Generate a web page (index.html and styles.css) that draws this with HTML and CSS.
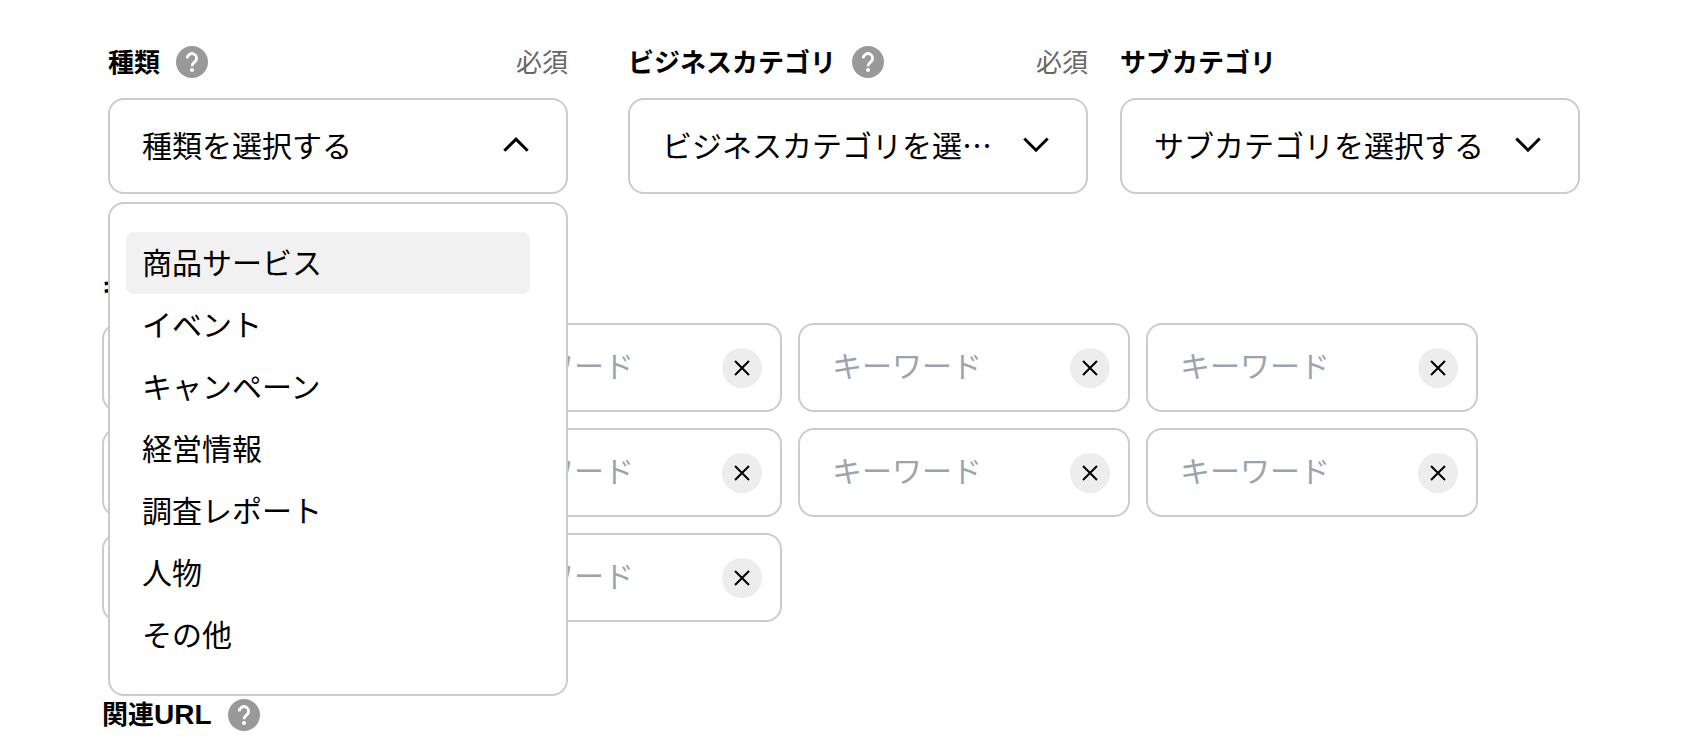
FILE: index.html
```html
<!doctype html>
<html lang="ja">
  <head>
    <title>種類・カテゴリ</title>
    <meta charset="utf-8" />
    <meta name="viewport" content="width=device-width, initial-scale=1" />
    <link rel="stylesheet" href="styles.css">
  </head>
  <body>
    <!-- shared icons -->
    <svg class="sprite" aria-hidden="true">
      <symbol id="icon-help" viewBox="0 0 32 32">
        <circle cx="16" cy="16" r="16" fill="#999"/>
        <path d="M11.4 12.4a4.6 4.6 0 1 1 7.4 3.4c-1.6 1.3-2.8 2-2.8 4.4" fill="none" stroke="#fff" stroke-width="2.8"/>
        <circle cx="16" cy="24" r="2" fill="#fff"/>
      </symbol>
      <symbol id="icon-down" viewBox="0 0 32 32">
        <path d="M4.3 8.5L16 20.2 27.700 8.5" fill="none" stroke="#000" stroke-width="3"/>
      </symbol>
      <symbol id="icon-up" viewBox="0 0 32 32">
        <path d="M4.300 20.800L16 9.100 27.700 20.800" fill="none" stroke="#000" stroke-width="3"/>
      </symbol>
      <symbol id="icon-close" viewBox="0 0 16 16">
        <path d="M1 1l14 14M15 1L1 15" fill="none" stroke="#000" stroke-width="2"/>
      </symbol>
    </svg>

    <form class="form">
      <div class="fields">
        <div class="field field-type">
          <div class="field-head">
            <label class="title" for="type">種類</label>
            <button type="button" class="help" aria-label="種類について"><svg><use href="#icon-help"/></svg></button>
            <span class="required">必須</span>
          </div>
          <div class="select-box">
            <select id="type" class="select">
              <option>種類を選択する</option>
            </select>
            <svg class="arrow"><use href="#icon-up"/></svg>
            <ul class="menu" role="listbox" aria-label="種類">
              <li class="menu-item active" role="option" aria-selected="true">商品サービス</li>
              <li class="menu-item" role="option">イベント</li>
              <li class="menu-item" role="option">キャンペーン</li>
              <li class="menu-item" role="option">経営情報</li>
              <li class="menu-item" role="option">調査レポート</li>
              <li class="menu-item" role="option">人物</li>
              <li class="menu-item" role="option">その他</li>
            </ul>
          </div>
        </div>

        <div class="field">
          <div class="field-head">
            <label class="title" for="category">ビジネスカテゴリ</label>
            <button type="button" class="help" aria-label="ビジネスカテゴリについて"><svg><use href="#icon-help"/></svg></button>
            <span class="required">必須</span>
          </div>
          <div class="select-box">
            <select id="category" class="select">
              <option>ビジネスカテゴリを選択する</option>
            </select>
            <svg class="arrow"><use href="#icon-down"/></svg>
          </div>
        </div>

        <div class="field">
          <div class="field-head">
            <label class="title" for="subcategory">サブカテゴリ</label>
          </div>
          <div class="select-box">
            <select id="subcategory" class="select">
              <option>サブカテゴリを選択する</option>
            </select>
            <svg class="arrow"><use href="#icon-down"/></svg>
          </div>
        </div>
      </div>

      <div class="section">
        <div class="field-head">
          <span class="title">キーワード</span>
        </div>
        <div class="keywords">
          <div class="keyword">
            <input type="text" placeholder="キーワード" aria-label="キーワード1">
            <button type="button" class="clear" aria-label="削除"><svg><use href="#icon-close"/></svg></button>
          </div>
          <div class="keyword">
            <input type="text" placeholder="キーワード" aria-label="キーワード2">
            <button type="button" class="clear" aria-label="削除"><svg><use href="#icon-close"/></svg></button>
          </div>
          <div class="keyword">
            <input type="text" placeholder="キーワード" aria-label="キーワード3">
            <button type="button" class="clear" aria-label="削除"><svg><use href="#icon-close"/></svg></button>
          </div>
          <div class="keyword">
            <input type="text" placeholder="キーワード" aria-label="キーワード4">
            <button type="button" class="clear" aria-label="削除"><svg><use href="#icon-close"/></svg></button>
          </div>
          <div class="keyword">
            <input type="text" placeholder="キーワード" aria-label="キーワード5">
            <button type="button" class="clear" aria-label="削除"><svg><use href="#icon-close"/></svg></button>
          </div>
          <div class="keyword">
            <input type="text" placeholder="キーワード" aria-label="キーワード6">
            <button type="button" class="clear" aria-label="削除"><svg><use href="#icon-close"/></svg></button>
          </div>
          <div class="keyword">
            <input type="text" placeholder="キーワード" aria-label="キーワード7">
            <button type="button" class="clear" aria-label="削除"><svg><use href="#icon-close"/></svg></button>
          </div>
          <div class="keyword">
            <input type="text" placeholder="キーワード" aria-label="キーワード8">
            <button type="button" class="clear" aria-label="削除"><svg><use href="#icon-close"/></svg></button>
          </div>
          <div class="keyword">
            <input type="text" placeholder="キーワード" aria-label="キーワード9">
            <button type="button" class="clear" aria-label="削除"><svg><use href="#icon-close"/></svg></button>
          </div>
          <div class="keyword">
            <input type="text" placeholder="キーワード" aria-label="キーワード10">
            <button type="button" class="clear" aria-label="削除"><svg><use href="#icon-close"/></svg></button>
          </div>
        </div>
      </div>

      <div class="section">
        <div class="field-head">
          <span class="title">関連<span class="latin">URL</span></span>
          <button type="button" class="help" aria-label="関連URLについて"><svg><use href="#icon-help"/></svg></button>
        </div>
      </div>
    </form>
  </body>
</html>
```
FILE: styles.css
```css
* {
	box-sizing:border-box;
	padding:0;
	margin:0;
}

body {
	background-color:#fff;
	color:#000;
	font-family:"Noto Sans CJK JP", sans-serif;
	font-size:30px;
}

button, input, select {
	font:inherit;
	color:inherit;
	border:none;
	background:none;
}

.sprite {
	display:none;
}

.form {
	padding:46px 116px 0 102px;
}

.fields {
	display:flex;
	gap:32px;
	padding-left:6px;
}

.field {
	flex:1 1 0;
	min-width:0;
}

.field-type {
	margin-right:28px;
}

.field-head {
	display:flex;
	align-items:center;
	gap:16px;
	height:32px;
	margin-bottom:20px;
	font-size:26px;
	line-height:30px;
}

.title, .required {
	padding-bottom:2px;
}

.title {
	font-weight:bold;
	white-space:nowrap;
}

.title .latin {
	font-family:"Liberation Sans", sans-serif;
	font-size:28px;
}

.help, .help svg {
	display:block;
	width:32px;
	height:32px;
}

.required {
	margin-left:auto;
	color:#666;
}

.select-box {
	position:relative;
}

.select {
	display:block;
	width:100%;
	height:96px;
	padding:0 94px 4px 32px;
	border:2px solid #ccc;
	border-radius:16px;
	background-color:#fff;
	appearance:none;
	overflow:hidden;
	text-overflow:ellipsis;
	white-space:nowrap;
}

.arrow {
	position:absolute;
	top:32px;
	right:36px;
	width:32px;
	height:32px;
	pointer-events:none;
}

.menu {
	position:absolute;
	top:100%;
	left:0;
	z-index:10;
	width:100%;
	margin-top:8px;
	padding:28px 36px 28px 16px;
	border:2px solid #ccc;
	border-radius:16px;
	background-color:#fff;
	list-style:none;
}

.menu-item {
	height:62px;
	padding:0 16px;
	border-radius:8px;
	line-height:58px;
}

.menu-item.active {
	background-color:#f1f1f1;
}

.section {
	margin-top:77px;
}

.keywords {
	display:grid;
	grid-template-columns:repeat(auto-fill, 332px);
	gap:16px;
}

.keyword {
	display:flex;
	align-items:center;
	height:89px;
	padding:0 18px 0 32px;
	border:2px solid #ccc;
	border-radius:16px;
}

.keyword input {
	flex:1;
	min-width:0;
	padding-bottom:8px;
	outline:none;
}

.keyword input::placeholder {
	color:#9ca3af;
	opacity:1;
}

.clear {
	display:flex;
	align-items:center;
	justify-content:center;
	width:40px;
	height:40px;
	border-radius:50%;
	background-color:#ededed;
}

.clear svg {
	width:16px;
	height:16px;
}
```
